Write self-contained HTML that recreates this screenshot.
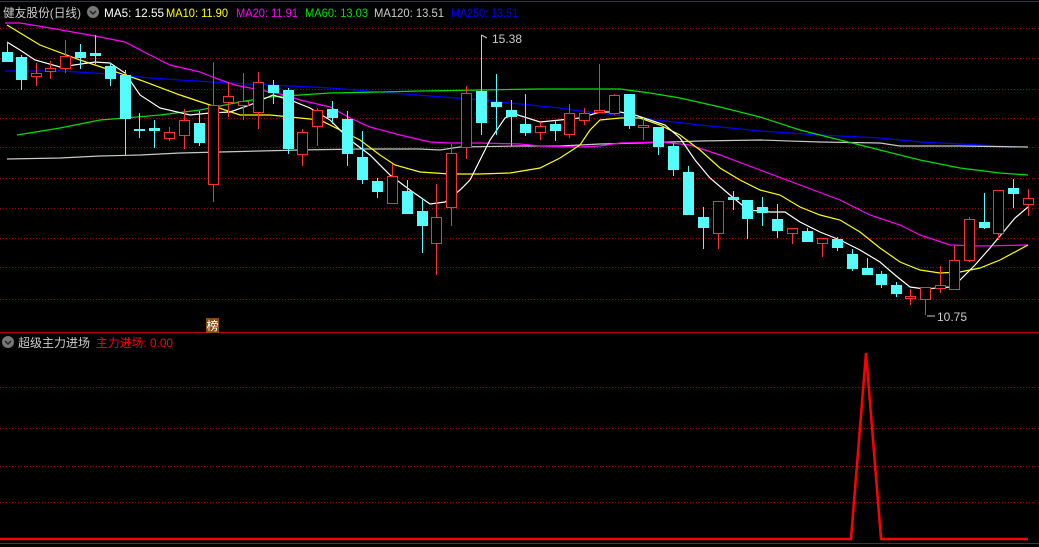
<!DOCTYPE html>
<html><head><meta charset="utf-8"><style>
html,body{margin:0;padding:0;background:#000;width:1039px;height:547px;overflow:hidden}
svg{display:block}
text{font-family:"Liberation Sans","Noto Sans CJK SC",sans-serif}
</style></head><body>
<svg id="s" width="1039" height="547" viewBox="0 0 1039 547" xmlns="http://www.w3.org/2000/svg">
<rect width="1039" height="547" fill="#000"/>
<line x1="0" y1="1.5" x2="1039" y2="1.5" stroke="#b00000" stroke-width="1"/>
<g stroke="#a00000" stroke-width="1" stroke-dasharray="1,2">
<line x1="0" y1="28.5" x2="1039" y2="28.5"/><line x1="0" y1="58.5" x2="1039" y2="58.5"/>
<line x1="0" y1="89.5" x2="1039" y2="89.5"/><line x1="0" y1="118.5" x2="1039" y2="118.5"/>
<line x1="0" y1="147.5" x2="1039" y2="147.5"/><line x1="0" y1="178.5" x2="1039" y2="178.5"/>
<line x1="0" y1="208.5" x2="1039" y2="208.5"/><line x1="0" y1="238.5" x2="1039" y2="238.5"/>
<line x1="0" y1="267.5" x2="1039" y2="267.5"/><line x1="0" y1="299.5" x2="1039" y2="299.5"/>
<line x1="0" y1="387.5" x2="1039" y2="387.5"/><line x1="0" y1="428.5" x2="1039" y2="428.5"/>
<line x1="0" y1="466.5" x2="1039" y2="466.5"/><line x1="0" y1="502.5" x2="1039" y2="502.5"/>
</g>
<line x1="0" y1="332.5" x2="1039" y2="332.5" stroke="#c00000"/>
<line x1="0" y1="543.5" x2="1039" y2="543.5" stroke="#c00000"/>
<g fill="none" stroke-width="1.2">
<polyline stroke="#0000ff" points="5,71 60,71 110,74 150,78 180,80 230,83 290,86 330,88 380,92 430,96 470,99 510,103 560,108 580,111 600,113 640,118 700,125 760,131 820,135 880,138 920,142 960,144 1020,147"/>
<polyline stroke="#c8c8c8" points="7,159 60,158 100,156 140,155 180,153 220,152 260,151 300,150 360,149 420,149 440,150 460,147 520,146 560,146 600,144 640,143 700,141 760,140 820,142 880,143 900,146 960,146 1028,147"/>
<polyline stroke="#00e000" points="17,135 60,128 100,120 125,118 160,115 200,110 240,102 270,97 300,95 330,93 380,92 420,91 480,90 540,89 580,89 620,89 650,93 680,98 720,107 760,117 800,130 840,140 880,150 920,160 960,168 1000,173 1028,175"/>
<polyline stroke="#ff00ff" points="5,23 20,23 50,28 95,36 125,42 150,55 170,65 200,72 215,78 235,85 260,90 285,95 300,100 330,107 350,118 370,127 400,135 430,142 450,143 480,143 520,144 540,146 580,147 600,146 620,143 660,142 690,145 720,155 760,170 800,185 840,200 870,215 900,225 920,235 950,245 980,246 1028,245"/>
<polyline stroke="#ffff00" points="7,25 40,45 80,60 110,70 140,80 180,95 210,105 240,115 270,115 300,118 320,120 340,130 360,140 380,155 395,165 420,172 450,174 480,174 510,173 540,168 560,158 580,145 590,130 600,120 620,118 640,118 660,125 680,135 700,150 720,168 740,180 760,190 780,195 800,207 820,215 840,220 860,232 880,248 900,262 920,270 940,273 960,272 980,268 1000,260 1028,245"/>
<polyline stroke="#ffffff" points="7,42 20,50 35,60 60,67 95,62 110,63 125,73 140,95 160,108 190,115 210,113 230,112 250,105 273,95 290,100 310,108 330,120 350,140 370,155 390,175 410,190 430,204 445,202 460,190 470,180 480,160 490,140 505,118 515,114 540,122 560,120 580,118 600,112 620,112 635,115 650,120 665,125 680,138 695,160 710,178 730,195 748,210 770,212 785,212 800,222 820,232 840,240 860,250 880,262 895,275 910,287 925,289 950,287 960,280 975,265 990,248 1005,230 1015,218 1028,207"/>
</g>
<g id="c"></g>
<line x1="481.5" y1="35" x2="487" y2="38" stroke="#ccc"/>
<text x="492" y="43" fill="#ccc" font-size="12">15.38</text>
<line x1="927" y1="316" x2="935" y2="316" stroke="#ccc"/>
<text x="937" y="321" fill="#ccc" font-size="12">10.75</text>
<rect x="206" y="318" width="13" height="15" fill="#8b4a10"/>
<text x="206.5" y="330" fill="#fff" font-size="12">榜</text>
<circle cx="93" cy="12" r="6" fill="#777"/><path d="M90,11 L93,14 L96,11" stroke="#222" stroke-width="1.5" fill="none"/>
<g font-size="12">
<text x="3" y="17" fill="#ccc" textLength="78" lengthAdjust="spacingAndGlyphs">健友股份(日线)</text>
<text x="104" y="17" fill="#fff" textLength="60" lengthAdjust="spacingAndGlyphs">MA5: 12.55</text>
<text x="166" y="17" fill="#ffff00" textLength="62" lengthAdjust="spacingAndGlyphs">MA10: 11.90</text>
<text x="236" y="17" fill="#ff00ff" textLength="62" lengthAdjust="spacingAndGlyphs">MA20: 11.91</text>
<text x="305" y="17" fill="#00e000" textLength="63" lengthAdjust="spacingAndGlyphs">MA60: 13.03</text>
<text x="374" y="17" fill="#ccc" textLength="70" lengthAdjust="spacingAndGlyphs">MA120: 13.51</text>
<text x="451" y="17" fill="#0000ff" textLength="67" lengthAdjust="spacingAndGlyphs">MA250: 13.51</text>
</g>
<circle cx="8" cy="342" r="6" fill="#777"/><path d="M5,341 L8,344 L11,341" stroke="#222" stroke-width="1.5" fill="none"/>
<g font-size="12">
<text x="18" y="347" fill="#ccc" textLength="72" lengthAdjust="spacingAndGlyphs">超级主力进场</text>
<text x="96" y="347" fill="#ff0000" textLength="77" lengthAdjust="spacingAndGlyphs">主力进场: 0.00</text>
</g>
<polyline fill="none" stroke="#ff0000" stroke-width="2.5" points="0,539 851,539 866,353 881,539 1028,539"/>
</svg>
<script>
var d=[[7,52,61,42,62,0],[21,57,79,55,90,0],[36,73,76,63,86,1],[50,68,71,61,79,1],[65,56,68,40,73,1],[80,52,57,44,69,0],[95,53,55,35,64,0],[110,66,78,63,86,0],[125,75,118,70,155,0],[139,129,130,113,138,0],[154,128,130,120,148,0],[169,132,138,127,141,1],[184,120,135,109,149,1],[199,123,142,111,146,0],[213,105,184,62,202,1],[228,96,102,82,117,1],[243,101,105,73,120,1],[258,82,112,72,129,1],[273,85,92,80,104,0],[288,90,148,88,154,0],[302,132,154,129,166,1],[317,110,126,108,146,1],[332,109,117,101,124,0],[347,119,153,111,166,0],[362,157,179,131,184,0],[377,181,191,178,198,0],[392,176,203,164,203,1],[407,191,213,180,214,0],[422,211,225,198,253,0],[436,217,243,184,275,1],[451,153,207,144,226,1],[466,93,147,86,159,1],[481,91,122,35,135,0],[496,102,106,74,135,0],[511,110,116,100,146,0],[525,124,132,94,136,0],[540,126,132,122,140,1],[555,124,130,120,141,0],[569,113,134,104,138,1],[584,113,120,108,125,1],[599,110,112,64,113,1],[614,95,113,94,115,1],[629,94,125,94,129,0],[643,125,127,118,140,1],[658,127,146,127,155,0],[673,146,169,143,176,0],[688,172,214,166,215,0],[703,217,227,207,249,0],[718,201,233,201,249,1],[733,197,199,191,210,0],[747,200,218,200,239,0],[762,207,212,197,226,0],[777,219,230,204,238,0],[792,228,233,228,244,1],[807,231,241,228,241,0],[822,238,243,238,257,1],[837,239,247,237,251,0],[852,254,268,249,271,0],[867,268,274,258,274,0],[881,274,284,271,288,0],[896,285,293,282,297,0],[910,296,298,289,305,1],[925,287,299,287,315,1],[940,285,288,266,293,1],[954,260,289,246,289,1],[969,219,260,217,262,1],[984,222,227,193,229,0],[998,190,233,190,240,1],[1013,188,193,179,208,0],[1028,198,204,189,216,1]];
var g=document.getElementById('c'),h='';
d.forEach(function(c){var x=c[0],t=c[1],b=c[2],col=c[5]?'#ff3030':'#54fcfc';
var hh=Math.max(b-t,1);
if(c[5]){h+='<line x1="'+(x+.5)+'" y1="'+c[3]+'" x2="'+(x+.5)+'" y2="'+t+'" stroke="'+col+'"/>';h+='<line x1="'+(x+.5)+'" y1="'+b+'" x2="'+(x+.5)+'" y2="'+c[4]+'" stroke="'+col+'"/>';
h+='<rect x="'+(x-4.5)+'" y="'+(t+.5)+'" width="10" height="'+hh+'" fill="#000" stroke="'+col+'"/>';}
else{h+='<line x1="'+(x+.5)+'" y1="'+c[3]+'" x2="'+(x+.5)+'" y2="'+c[4]+'" stroke="'+col+'"/>';h+='<rect x="'+(x-5)+'" y="'+t+'" width="11" height="'+(hh+1)+'" fill="'+col+'"/>';}});
g.innerHTML=h;
</script>
</body></html>
